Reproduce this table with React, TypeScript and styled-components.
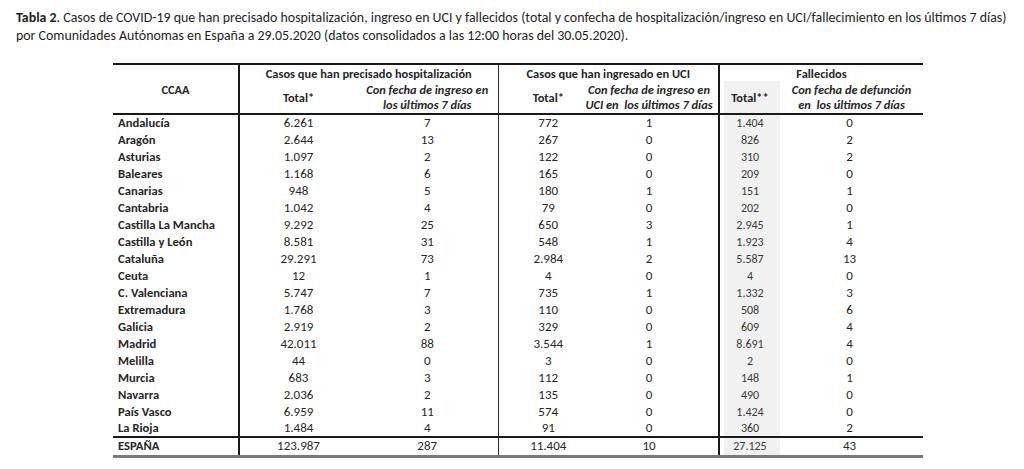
import React from "react";
import styled, { createGlobalStyle } from "styled-components";

const Global = createGlobalStyle`
  html, body { margin: 0; padding: 0; background: #ffffff; }
  body { font-family: Carlito, Lato, "Liberation Sans", sans-serif; color: #222; }
`;

const Page = styled.div`
  width: 1024px;
  height: 469px;
  overflow: hidden;
  padding: 9px 0 0 16px;
  box-sizing: border-box;
`;

const Caption = styled.p`
  margin: 0;
  font-size: 13.9px;
  line-height: 18px;
  color: #1e1e1e;
  white-space: nowrap;
  b { font-weight: 700; }
`;

const Table = styled.table`
  margin: 18px 0 0 97px;
  border-collapse: collapse;
  table-layout: fixed;
  width: 810px;
  font-size: 12px;
  color: #262626;
  border-top: 2px solid #1a1a1a;
  border-bottom: 3px solid #7a7a7a;
`;

type Edge = "thick" | "thin" | "none";

const edgeCss = (e?: Edge) =>
  e === "thick" ? "2px solid #1a1a1a" : e === "thin" ? "1px solid #2a2a2a" : "none";

const Th = styled.th<{ $right?: Edge; $shade?: boolean; $italic?: boolean; $h?: number; $pl?: number }>`
  font-weight: 700;
  font-style: ${(p) => (p.$italic ? "italic" : "normal")};
  text-align: center;
  vertical-align: middle;
  white-space: nowrap;
  padding: 0 0 0 ${(p) => p.$pl ?? 0}px;
  height: ${(p) => p.$h ?? 16}px;
  line-height: 15px;
  font-size: 12.4px;
  border-right: ${(p) => edgeCss(p.$right)};
  background: ${(p) => (p.$shade ? "linear-gradient(to right, #fff 4px, #f1f1f1 4px)" : "transparent")};
`;

const HeadRow = styled.tr<{ $last?: boolean }>`
  border-bottom: ${(p) => (p.$last ? "2px solid #1a1a1a" : "none")};
`;

const Row = styled.tr<{ $total?: boolean }>`
  height: ${(p) => (p.$total ? 19 : 17)}px;
  border-top: ${(p) => (p.$total ? "2px solid #1a1a1a" : "none")};
`;

const Name = styled.td`
  font-weight: 700;
  font-size: 12.6px;
  text-align: left;
  padding: 0 0 0 5px;
  border-right: 2px solid #1a1a1a;
  white-space: nowrap;
  line-height: 16px;
`;

const Num = styled.td<{ $right?: Edge; $shade?: boolean; $pl?: number; $pr?: number }>`
  text-align: center;
  white-space: nowrap;
  padding: 0 ${(p) => p.$pr ?? 0}px 0 ${(p) => p.$pl ?? 0}px;
  line-height: 16px;
  font-size: ${(p) => (p.$shade ? 12 : 13)}px;
  color: ${(p) => (p.$shade ? "#3a3a3a" : "#262626")};
  border-right: ${(p) => edgeCss(p.$right)};
  background: ${(p) => (p.$shade ? "linear-gradient(to right, #fff 4px, #f1f1f1 4px)" : "transparent")};
`;

type R = [string, string, string, string, string, string, string];

const rows: R[] = [
  ["Andalucía", "6.261", "7", "772", "1", "1.404", "0"],
  ["Aragón", "2.644", "13", "267", "0", "826", "2"],
  ["Asturias", "1.097", "2", "122", "0", "310", "2"],
  ["Baleares", "1.168", "6", "165", "0", "209", "0"],
  ["Canarias", "948", "5", "180", "1", "151", "1"],
  ["Cantabria", "1.042", "4", "79", "0", "202", "0"],
  ["Castilla La Mancha", "9.292", "25", "650", "3", "2.945", "1"],
  ["Castilla y León", "8.581", "31", "548", "1", "1.923", "4"],
  ["Cataluña", "29.291", "73", "2.984", "2", "5.587", "13"],
  ["Ceuta", "12", "1", "4", "0", "4", "0"],
  ["C. Valenciana", "5.747", "7", "735", "1", "1.332", "3"],
  ["Extremadura", "1.768", "3", "110", "0", "508", "6"],
  ["Galicia", "2.919", "2", "329", "0", "609", "4"],
  ["Madrid", "42.011", "88", "3.544", "1", "8.691", "4"],
  ["Melilla", "44", "0", "3", "0", "2", "0"],
  ["Murcia", "683", "3", "112", "0", "148", "1"],
  ["Navarra", "2.036", "2", "135", "0", "490", "0"],
  ["País Vasco", "6.959", "11", "574", "0", "1.424", "0"],
  ["La Rioja", "1.484", "4", "91", "0", "360", "2"],
];

const total: R = ["ESPAÑA", "123.987", "287", "11.404", "10", "27.125", "43"];

const DataRow = ({ r, isTotal }: { r: R; isTotal?: boolean }) => (
  <Row $total={isTotal}>
    <Name>{r[0]}</Name>
    <Num>{r[1]}</Num>
    <Num $right="thin">{r[2]}</Num>
    <Num $pl={18}>{r[3]}</Num>
    <Num $right="thick">{r[4]}</Num>
    <Num $shade>{r[5]}</Num>
    <Num $pr={4}>{r[6]}</Num>
  </Row>
);

export default function App() {
  return (
    <Page>
      <Global />
      <Caption>
        <b>Tabla 2</b>. Casos de COVID-19 que han precisado hospitalización, ingreso en UCI y fallecidos (total y
        confecha de hospitalización/ingreso en UCI/fallecimiento en los últimos 7 días)
        <br />
        por Comunidades Autónomas en España a 29.05.2020 (datos consolidados a las 12:00 horas del 30.05.2020).
      </Caption>
      <Table>
        <colgroup>
          <col style={{ width: 126 }} />
          <col style={{ width: 118 }} />
          <col style={{ width: 141 }} />
          <col style={{ width: 82 }} />
          <col style={{ width: 139 }} />
          <col style={{ width: 61 }} />
          <col style={{ width: 143 }} />
        </colgroup>
        <thead>
          <HeadRow>
            <Th rowSpan={2} $right="thick">CCAA</Th>
            <Th colSpan={2} $right="thin">Casos que han precisado hospitalización</Th>
            <Th colSpan={2} $right="thick">Casos que han ingresado en UCI</Th>
            <Th colSpan={2}>Fallecidos</Th>
          </HeadRow>
          <HeadRow $last>
            <Th $h={32}>Total*</Th>
            <Th $h={32} $italic $right="thin">
              Con fecha de ingreso en
              <br />
              los últimos 7 días
            </Th>
            <Th $h={32} $pl={18}>Total*</Th>
            <Th $h={32} $italic $right="thick">
              Con fecha de ingreso en
              <br />
              UCI en&nbsp; los últimos 7 días
            </Th>
            <Th $h={32} $shade>Total**</Th>
            <Th $h={32} $italic>
              Con fecha de defunción
              <br />
              en&nbsp; los últimos 7 días
            </Th>
          </HeadRow>
        </thead>
        <tbody>
          {rows.map((r) => (
            <DataRow key={r[0]} r={r} />
          ))}
          <DataRow r={total} isTotal />
        </tbody>
      </Table>
    </Page>
  );
}
